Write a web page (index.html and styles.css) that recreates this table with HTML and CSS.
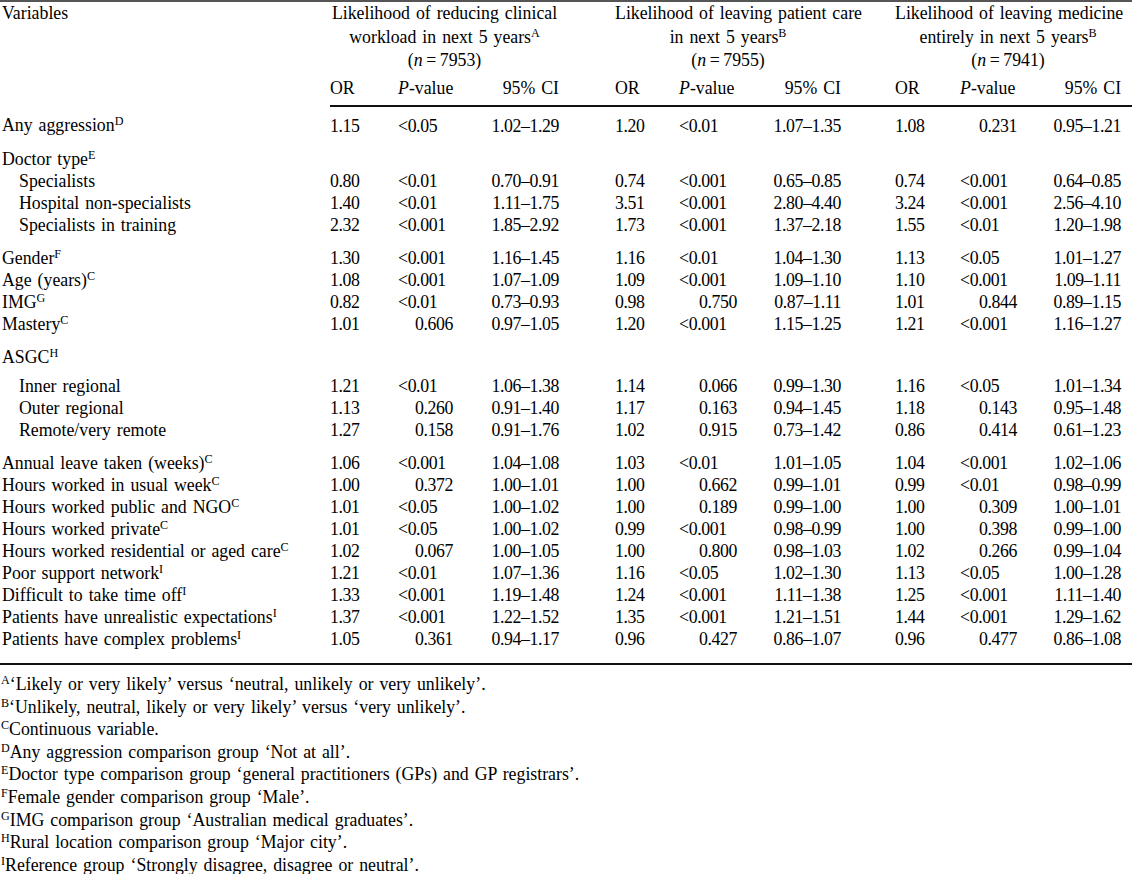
FILE: index.html
```html
<!DOCTYPE html>
<html>
<head>
<meta charset="utf-8">
<link rel="stylesheet" href="styles.css">
</head>
<body>
<table class="results">
  <colgroup>
    <col class="c-var"><col class="c-or1"><col class="c-p1"><col class="c-ci1">
    <col class="c-or2"><col class="c-p2"><col class="c-ci2">
    <col class="c-or3"><col class="c-p3"><col class="c-ci3">
  </colgroup>
  <thead>
    <tr class="grouphead">
      <th class="var" rowspan="2">Variables</th>
      <th class="group g1" colspan="3">Likelihood of reducing clinical<br>workload in next 5 years<sup>A</sup><br>(<i>n</i>&#8201;=&#8201;7953)</th>
      <th class="group g2" colspan="3">Likelihood of leaving patient care<br>in next 5 years<sup>B</sup><br>(<i>n</i>&#8201;=&#8201;7955)</th>
      <th class="group g3" colspan="3">Likelihood of leaving medicine<br>entirely in next 5 years<sup>B</sup><br>(<i>n</i>&#8201;=&#8201;7941)</th>
    </tr>
    <tr class="colhead">
      <th class="or">OR</th><th class="p"><i>P</i>-value</th><th class="ci">95% CI</th>
      <th class="or or2">OR</th><th class="p"><i>P</i>-value</th><th class="ci">95% CI</th>
      <th class="or or3">OR</th><th class="p"><i>P</i>-value</th><th class="ci ci3">95% CI</th>
    </tr>
  </thead>
  <tbody>
    <tr class="first">
      <td class="var">Any aggression<sup>D</sup></td>
      <td class="or">1.15</td><td class="p">&lt;0.05</td><td class="ci">1.02–1.29</td>
      <td class="or or2">1.20</td><td class="p">&lt;0.01</td><td class="ci">1.07–1.35</td>
      <td class="or or3">1.08</td><td class="p r">0.231</td><td class="ci ci3">0.95–1.21</td>
    </tr>
    <tr class="gstart">
      <td class="var">Doctor type<sup>E</sup></td>
      <td></td><td></td><td></td><td></td><td></td><td></td><td></td><td></td><td></td>
    </tr>
    <tr>
      <td class="var sub">Specialists</td>
      <td class="or">0.80</td><td class="p">&lt;0.01</td><td class="ci">0.70–0.91</td>
      <td class="or or2">0.74</td><td class="p">&lt;0.001</td><td class="ci">0.65–0.85</td>
      <td class="or or3">0.74</td><td class="p">&lt;0.001</td><td class="ci ci3">0.64–0.85</td>
    </tr>
    <tr>
      <td class="var sub">Hospital non-specialists</td>
      <td class="or">1.40</td><td class="p">&lt;0.01</td><td class="ci">1.11–1.75</td>
      <td class="or or2">3.51</td><td class="p">&lt;0.001</td><td class="ci">2.80–4.40</td>
      <td class="or or3">3.24</td><td class="p">&lt;0.001</td><td class="ci ci3">2.56–4.10</td>
    </tr>
    <tr>
      <td class="var sub">Specialists in training</td>
      <td class="or">2.32</td><td class="p">&lt;0.001</td><td class="ci">1.85–2.92</td>
      <td class="or or2">1.73</td><td class="p">&lt;0.001</td><td class="ci">1.37–2.18</td>
      <td class="or or3">1.55</td><td class="p">&lt;0.01</td><td class="ci ci3">1.20–1.98</td>
    </tr>
    <tr class="gstart">
      <td class="var">Gender<sup>F</sup></td>
      <td class="or">1.30</td><td class="p">&lt;0.001</td><td class="ci">1.16–1.45</td>
      <td class="or or2">1.16</td><td class="p">&lt;0.01</td><td class="ci">1.04–1.30</td>
      <td class="or or3">1.13</td><td class="p">&lt;0.05</td><td class="ci ci3">1.01–1.27</td>
    </tr>
    <tr>
      <td class="var">Age (years)<sup>C</sup></td>
      <td class="or">1.08</td><td class="p">&lt;0.001</td><td class="ci">1.07–1.09</td>
      <td class="or or2">1.09</td><td class="p">&lt;0.001</td><td class="ci">1.09–1.10</td>
      <td class="or or3">1.10</td><td class="p">&lt;0.001</td><td class="ci ci3">1.09–1.11</td>
    </tr>
    <tr>
      <td class="var">IMG<sup>G</sup></td>
      <td class="or">0.82</td><td class="p">&lt;0.01</td><td class="ci">0.73–0.93</td>
      <td class="or or2">0.98</td><td class="p r">0.750</td><td class="ci">0.87–1.11</td>
      <td class="or or3">1.01</td><td class="p r">0.844</td><td class="ci ci3">0.89–1.15</td>
    </tr>
    <tr>
      <td class="var">Mastery<sup>C</sup></td>
      <td class="or">1.01</td><td class="p r">0.606</td><td class="ci">0.97–1.05</td>
      <td class="or or2">1.20</td><td class="p">&lt;0.001</td><td class="ci">1.15–1.25</td>
      <td class="or or3">1.21</td><td class="p">&lt;0.001</td><td class="ci ci3">1.16–1.27</td>
    </tr>
    <tr class="gstart">
      <td class="var">ASGC<sup>H</sup></td>
      <td></td><td></td><td></td><td></td><td></td><td></td><td></td><td></td><td></td>
    </tr>
    <tr class="asgc1">
      <td class="var sub">Inner regional</td>
      <td class="or">1.21</td><td class="p">&lt;0.01</td><td class="ci">1.06–1.38</td>
      <td class="or or2">1.14</td><td class="p r">0.066</td><td class="ci">0.99–1.30</td>
      <td class="or or3">1.16</td><td class="p">&lt;0.05</td><td class="ci ci3">1.01–1.34</td>
    </tr>
    <tr>
      <td class="var sub">Outer regional</td>
      <td class="or">1.13</td><td class="p r">0.260</td><td class="ci">0.91–1.40</td>
      <td class="or or2">1.17</td><td class="p r">0.163</td><td class="ci">0.94–1.45</td>
      <td class="or or3">1.18</td><td class="p r">0.143</td><td class="ci ci3">0.95–1.48</td>
    </tr>
    <tr>
      <td class="var sub">Remote/very remote</td>
      <td class="or">1.27</td><td class="p r">0.158</td><td class="ci">0.91–1.76</td>
      <td class="or or2">1.02</td><td class="p r">0.915</td><td class="ci">0.73–1.42</td>
      <td class="or or3">0.86</td><td class="p r">0.414</td><td class="ci ci3">0.61–1.23</td>
    </tr>
    <tr class="gstart">
      <td class="var">Annual leave taken (weeks)<sup>C</sup></td>
      <td class="or">1.06</td><td class="p">&lt;0.001</td><td class="ci">1.04–1.08</td>
      <td class="or or2">1.03</td><td class="p">&lt;0.01</td><td class="ci">1.01–1.05</td>
      <td class="or or3">1.04</td><td class="p">&lt;0.001</td><td class="ci ci3">1.02–1.06</td>
    </tr>
    <tr>
      <td class="var">Hours worked in usual week<sup>C</sup></td>
      <td class="or">1.00</td><td class="p r">0.372</td><td class="ci">1.00–1.01</td>
      <td class="or or2">1.00</td><td class="p r">0.662</td><td class="ci">0.99–1.01</td>
      <td class="or or3">0.99</td><td class="p">&lt;0.01</td><td class="ci ci3">0.98–0.99</td>
    </tr>
    <tr>
      <td class="var">Hours worked public and NGO<sup>C</sup></td>
      <td class="or">1.01</td><td class="p">&lt;0.05</td><td class="ci">1.00–1.02</td>
      <td class="or or2">1.00</td><td class="p r">0.189</td><td class="ci">0.99–1.00</td>
      <td class="or or3">1.00</td><td class="p r">0.309</td><td class="ci ci3">1.00–1.01</td>
    </tr>
    <tr>
      <td class="var">Hours worked private<sup>C</sup></td>
      <td class="or">1.01</td><td class="p">&lt;0.05</td><td class="ci">1.00–1.02</td>
      <td class="or or2">0.99</td><td class="p">&lt;0.001</td><td class="ci">0.98–0.99</td>
      <td class="or or3">1.00</td><td class="p r">0.398</td><td class="ci ci3">0.99–1.00</td>
    </tr>
    <tr>
      <td class="var">Hours worked residential or aged care<sup>C</sup></td>
      <td class="or">1.02</td><td class="p r">0.067</td><td class="ci">1.00–1.05</td>
      <td class="or or2">1.00</td><td class="p r">0.800</td><td class="ci">0.98–1.03</td>
      <td class="or or3">1.02</td><td class="p r">0.266</td><td class="ci ci3">0.99–1.04</td>
    </tr>
    <tr>
      <td class="var">Poor support network<sup>I</sup></td>
      <td class="or">1.21</td><td class="p">&lt;0.01</td><td class="ci">1.07–1.36</td>
      <td class="or or2">1.16</td><td class="p">&lt;0.05</td><td class="ci">1.02–1.30</td>
      <td class="or or3">1.13</td><td class="p">&lt;0.05</td><td class="ci ci3">1.00–1.28</td>
    </tr>
    <tr>
      <td class="var">Difficult to take time off<sup>I</sup></td>
      <td class="or">1.33</td><td class="p">&lt;0.001</td><td class="ci">1.19–1.48</td>
      <td class="or or2">1.24</td><td class="p">&lt;0.001</td><td class="ci">1.11–1.38</td>
      <td class="or or3">1.25</td><td class="p">&lt;0.001</td><td class="ci ci3">1.11–1.40</td>
    </tr>
    <tr>
      <td class="var">Patients have unrealistic expectations<sup>I</sup></td>
      <td class="or">1.37</td><td class="p">&lt;0.001</td><td class="ci">1.22–1.52</td>
      <td class="or or2">1.35</td><td class="p">&lt;0.001</td><td class="ci">1.21–1.51</td>
      <td class="or or3">1.44</td><td class="p">&lt;0.001</td><td class="ci ci3">1.29–1.62</td>
    </tr>
    <tr class="last">
      <td class="var">Patients have complex problems<sup>I</sup></td>
      <td class="or">1.05</td><td class="p r">0.361</td><td class="ci">0.94–1.17</td>
      <td class="or or2">0.96</td><td class="p r">0.427</td><td class="ci">0.86–1.07</td>
      <td class="or or3">0.96</td><td class="p r">0.477</td><td class="ci ci3">0.86–1.08</td>
    </tr>
  </tbody>
</table>
<div class="notes">
  <p><sup>A</sup>‘Likely or very likely’ versus ‘neutral, unlikely or very unlikely’.</p>
  <p><sup>B</sup>‘Unlikely, neutral, likely or very likely’ versus ‘very unlikely’.</p>
  <p><sup>C</sup>Continuous variable.</p>
  <p><sup>D</sup>Any aggression comparison group ‘Not at all’.</p>
  <p><sup>E</sup>Doctor type comparison group ‘general practitioners (GPs) and GP registrars’.</p>
  <p><sup>F</sup>Female gender comparison group ‘Male’.</p>
  <p><sup>G</sup>IMG comparison group ‘Australian medical graduates’.</p>
  <p><sup>H</sup>Rural location comparison group ‘Major city’.</p>
  <p><sup>I</sup>Reference group ‘Strongly disagree, disagree or neutral’.</p>
</div>
</body>
</html>
```
FILE: styles.css
```css
html, body {
  margin: 0;
  padding: 0;
  background: #ffffff;
}

body {
  color: #000000;
  font-family: "Liberation Serif", "Times New Roman", serif;
  font-size: 17.8px;
  word-spacing: 1.5px;
}

sup {
  font-size: 0.68em;
  line-height: 0;
  vertical-align: 0.5em;
  word-spacing: 0;
}

.results {
  width: 1132px;
  margin-top: 0;
  border-collapse: collapse;
  table-layout: fixed;
  border-top: 2px solid #555555;
  border-bottom: 2px solid #111111;
}

.c-var { width: 330px; }
.c-or1 { width: 68px; }
.c-p1 { width: 55px; }
.c-ci1 { width: 106px; }
.c-or2 { width: 120px; }
.c-p2 { width: 58px; }
.c-ci2 { width: 104px; }
.c-or3 { width: 119px; }
.c-p3 { width: 57px; }
.c-ci3 { width: 115px; }

.results th,
.results td {
  padding: 0;
  font-weight: normal;
  white-space: nowrap;
}

.results th {
  line-height: 23.5px;
  vertical-align: top;
}

.results td {
  line-height: 22px;
  vertical-align: top;
}

.results td.or,
.results td.p,
.results td.ci {
  letter-spacing: -0.4px;
}

.results .var {
  text-align: left;
  padding-left: 2px;
}

.results .var.sub {
  padding-left: 19px;
}

.results .group {
  text-align: center;
}

.results .g2 { padding-left: 56px; }
.results .g3 { padding-left: 54px; padding-right: 11px; }

.results .or { text-align: left; }
.results .or2 { padding-left: 56px; }
.results .or3 { padding-left: 54px; }

.results .p { text-align: left; }
.results .p.r { text-align: right; }

.results .ci { text-align: right; }
.results .ci3 { padding-right: 11px; }

.colhead th {
  line-height: 24px;
  padding-top: 3.5px;
  padding-bottom: 5px;
  border-bottom: 2px solid #111111;
}

.results tr.first td { padding-top: 8px; }
.results tr.gstart td { padding-top: 11px; }
.results tr.asgc1 td { padding-top: 7px; }
.results tr.last td { padding-bottom: 13px; }

.notes {
  padding-top: 8px;
}

.notes p {
  margin: 0;
  line-height: 22.6px;
  padding-left: 1px;
}
```
